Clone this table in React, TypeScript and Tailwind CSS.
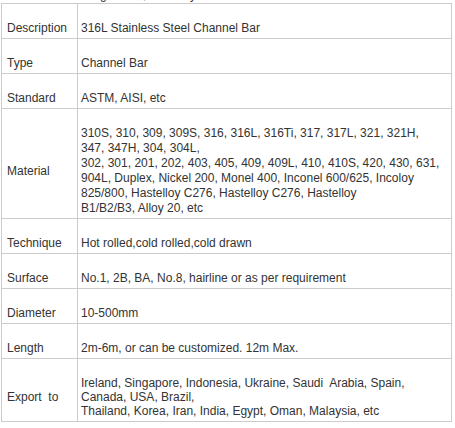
import React from "react";

const rows: { label: string; lines: string[]; lh?: string }[] = [
  { label: "Description", lines: ["316L Stainless Steel Channel Bar"] },
  { label: "Type", lines: ["Channel Bar"] },
  { label: "Standard", lines: ["ASTM, AISI, etc"] },
  {
    label: "Material",
    lines: [
      "310S, 310, 309, 309S, 316, 316L, 316Ti, 317, 317L, 321, 321H,",
      "347, 347H, 304, 304L,",
      "302, 301, 201, 202, 403, 405, 409, 409L, 410, 410S, 420, 430, 631,",
      "904L, Duplex, Nickel 200, Monel 400, Inconel 600/625, Incoloy",
      "825/800, Hastelloy C276, Hastelloy C276, Hastelloy",
      "B1/B2/B3, Alloy 20, etc",
    ],
  },
  { label: "Technique", lines: ["Hot rolled,cold rolled,cold drawn"] },
  { label: "Surface", lines: ["No.1, 2B, BA, No.8, hairline or as per requirement"] },
  { label: "Diameter", lines: ["10-500mm"] },
  { label: "Length", lines: ["2m-6m, or can be customized. 12m Max."] },
  {
    label: "Export\u00a0 to",
    lines: [
      "Ireland, Singapore, Indonesia, Ukraine, Saudi\u00a0 Arabia, Spain,",
      "Canada, USA, Brazil,",
      "Thailand, Korea, Iran, India, Egypt, Oman, Malaysia, etc",
    ],
    lh: "leading-[14px] pb-[3px]",
  },
];

export default function App() {
  return (
    <div
      className="w-[455px] h-[428px] bg-white text-[#333] text-[12px] overflow-hidden"
      style={{ fontFamily: '"Liberation Sans", Arial, sans-serif' }}
    >
      <div className="h-[3px] overflow-hidden">
        <div className="mt-[-12px] leading-[15px] whitespace-nowrap">
          <span className="ml-[100px]">g</span>
          <span className="ml-[36px]">,</span>
          <span className="ml-[44px]">y</span>
        </div>
      </div>
      <table className="ml-px border-separate border-spacing-0 border-l border-t border-[#cccccc] w-[451px] table-fixed">
        <colgroup>
          <col className="w-[76px]" />
          <col className="w-[374px]" />
        </colgroup>
        <tbody>
          {rows.map((r) => (
            <tr key={r.label}>
              <td className="border-r border-b border-[#cccccc] align-middle pl-[5px] pr-[2px] py-[2px] leading-[15px] whitespace-nowrap">
                <p className="mt-[15px]">{r.label}</p>
              </td>
              <td
                className={`border-r border-b border-[#cccccc] align-middle pl-[3px] pr-[2px] py-[2px] whitespace-nowrap ${
                  r.lh ?? "leading-[15px]"
                }`}
              >
                <p className="mt-[15px]">
                  {r.lines.map((l, i) => (
                    <React.Fragment key={i}>
                      {i > 0 && <br />}
                      {l}
                    </React.Fragment>
                  ))}
                </p>
              </td>
            </tr>
          ))}
        </tbody>
      </table>
    </div>
  );
}
